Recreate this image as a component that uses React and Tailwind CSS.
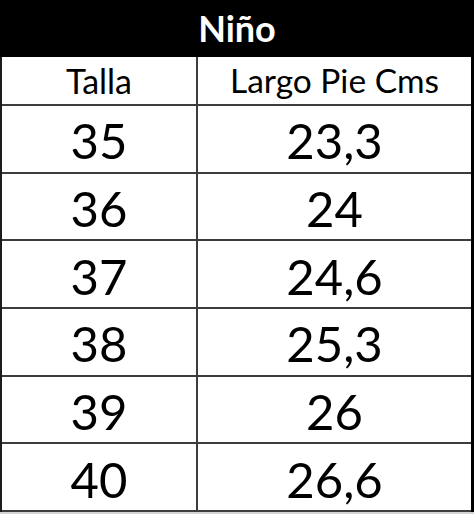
import React from 'react';

const rows = [
    ['35', '23,3'],
    ['36', '24'],
    ['37', '24,6'],
    ['38', '25,3'],
    ['39', '26'],
    ['40', '26,6'],
];

export default function App() {
    return (
        <div className="w-[474px] h-[514px] bg-[#d4d4d4] font-['Lato',sans-serif] text-black">
            <div className="h-[57px] bg-black text-white font-bold text-[36px] flex items-center justify-center leading-none pb-[2px]">
                Niño
            </div>
            <div className="h-[455px] bg-white grid grid-cols-[196px_1fr] grid-rows-[49px_repeat(6,1fr)] border-l-2 border-l-[#1c1c1c] border-r-[3px] border-r-black">
                <div className="flex items-center justify-center border-r-2 border-b-2 border-[#3c3c3c] text-[34px] leading-none">
                    Talla
                </div>
                <div className="flex items-center justify-center border-b-2 border-[#3c3c3c] text-[33.5px] leading-none">
                    Largo Pie Cms
                </div>
                {rows.map(([talla, largo]) => (
                    <React.Fragment key={talla}>
                        <div className="flex items-center justify-center border-r-2 border-b-2 border-[#3c3c3c] text-[49px] leading-none pt-[4px]">
                            {talla}
                        </div>
                        <div className="flex items-center justify-center border-b-2 border-[#3c3c3c] text-[49px] leading-none pt-[4px]">
                            {largo}
                        </div>
                    </React.Fragment>
                ))}
            </div>
        </div>
    );
}
